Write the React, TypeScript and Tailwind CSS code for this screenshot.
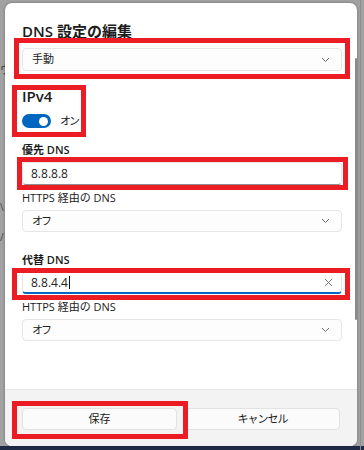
import React from 'react';

const font = { fontFamily: '"Open Sans", "Noto Sans CJK JP", sans-serif' };

const Chevron: React.FC = () => (
  <svg width="9" height="6" viewBox="0 0 9 6" fill="none" stroke="#6b6b6b" strokeWidth="1">
    <path d="M1 1l3.5 3.5L8 1" />
  </svg>
);

const Select: React.FC<{ value: string; tall?: boolean; kana?: boolean }> = ({ value, tall, kana }) => (
  <div className={`${tall ? 'h-[23px]' : 'h-[22px]'} flex items-center justify-between rounded-[4px] border border-[#e6e6e6] bg-[#fdfdfd] pl-[9px] pr-[11px] text-[11px] text-[#222]`}>
    <span className={kana ? 'tracking-[-2px]' : ''}>{value}</span>
    <Chevron />
  </div>
);

const Label: React.FC<{ text: string; bold?: boolean }> = ({ text, bold }) => (
  <div className={`flex h-[18px] items-center text-[11px] text-[#1b1b1b] ${bold ? 'font-semibold' : ''}`}>{text}</div>
);

const Field: React.FC<{ label: string; bold?: boolean; children: React.ReactNode }> = ({ label, bold, children }) => (
  <div className="flex flex-col gap-[3px]">
    <Label text={label} bold={bold} />
    {children}
  </div>
);

const App: React.FC = () => {
  return (
    <div className="relative h-[450px] w-[364px] overflow-hidden bg-[#a2a2a2]" style={font}>
      {/* background window bits */}
      <div className="absolute left-0 top-[62px] text-[11px] text-[#333]">ウ</div>
      <div className="absolute left-0 top-[200px] text-[10px] text-[#444]">\</div>
      <div className="absolute left-0 top-[230px] text-[10px] text-[#444]">/</div>
      <div className="absolute bottom-0 left-0 h-[4px] w-full bg-[#1f2b45]" />
      <div className="absolute right-[3px] top-0 h-full w-[1px] bg-[#8c8c8c]" />

      {/* dialog window */}
      <div className="relative ml-[5px] mt-[3px] flex h-[443px] w-[352px] flex-col overflow-hidden rounded-[7px] bg-white shadow-[0_0_3px_rgba(0,0,0,0.35)]">
        <div className="relative flex flex-1 flex-col pl-[17px] pr-[15px] pt-[15px]">
          <div className="absolute right-0 top-[55px] h-[262px] w-[2px] rounded-full bg-[#8a8a8a]" />

          <div className="flex flex-col gap-[4px]">
            <div className="flex h-[26px] items-center text-[15px] font-semibold text-[#1b1b1b]">DNS 設定の編集</div>
            <Select value="手動" tall />
          </div>

          <div className="mt-[15px] flex flex-col gap-[6px]">
            <div className="flex h-[20px] items-center text-[15px] font-semibold text-[#1b1b1b]">IPv4</div>
            <div className="flex h-[18px] items-center gap-[9px]">
              <div className="flex h-[14px] w-[29px] items-center justify-end rounded-full bg-[#0067c0] pr-[3px]">
                <div className="h-[9px] w-[9px] rounded-full bg-white" />
              </div>
              <span className="text-[11px] tracking-[-2px] text-[#1b1b1b]">オン</span>
            </div>
          </div>

          <div className="mt-[11px] flex flex-col gap-[4px]">
            <Field label="優先 DNS" bold>
              <div className="flex h-[23px] items-center rounded-[4px] border border-[#e6e6e6] border-b-[#8d8d8d] bg-white pl-[8px] text-[12px] text-[#222]">
                8.8.8.8
              </div>
            </Field>
            <Field label="HTTPS 経由の DNS">
              <Select value="オフ" kana />
            </Field>
          </div>

          <div className="mt-[19px] flex flex-col gap-[4px]">
            <Field label="代替 DNS" bold>
              <div className="flex h-[22px] items-center justify-between rounded-[4px] border border-[#e6e6e6] border-b-2 border-b-[#0067c0] bg-white px-[8px] text-[12px] text-[#222]">
                <span className="flex items-center">
                  8.8.4.4<span className="ml-[1px] inline-block h-[13px] w-[1px] bg-[#111]" />
                </span>
                <svg width="9" height="9" viewBox="0 0 9 9" stroke="#777" strokeWidth="1">
                  <path d="M1 1l7 7M8 1l-7 7" />
                </svg>
              </div>
            </Field>
            <Field label="HTTPS 経由の DNS">
              <Select value="オフ" kana />
            </Field>
          </div>

          <div className="mt-[28px] h-[3px] overflow-hidden">
            <div className="text-[15px] font-semibold leading-[15px] text-[#1b1b1b]">IPv6</div>
          </div>
        </div>

        <div className="flex h-[57px] gap-[8px] border-t border-[#e5e5e5] bg-[#f3f3f3] px-[17px] pt-[18px]">
          <div className="flex h-[22px] flex-1 items-center justify-center rounded-[4px] border border-[#e2e2e2] bg-[#fbfbfb] text-[11px] text-[#1b1b1b]">保存</div>
          <div className="flex h-[22px] flex-1 items-center justify-center rounded-[4px] border border-[#e2e2e2] bg-[#fbfbfb] text-[11px] tracking-[-1px] text-[#1b1b1b]">キャンセル</div>
        </div>
      </div>

      {/* red annotation boxes drawn over the screenshot */}
      <div className="absolute left-[14px] top-[38px] h-[41px] w-[336px] border-[5px] border-[#ec1c24]" />
      <div className="absolute left-[12px] top-[85px] h-[52px] w-[74px] border-[5px] border-[#ec1c24]" />
      <div className="absolute left-[17px] top-[157px] h-[33px] w-[331px] border-[5px] border-[#ec1c24]" />
      <div className="absolute left-[12px] top-[268px] h-[32px] w-[338px] border-[5px] border-[#ec1c24]" />
      <div className="absolute left-[12px] top-[401px] h-[38px] w-[176px] border-[5px] border-[#ec1c24]" />
    </div>
  );
};

export default App;
